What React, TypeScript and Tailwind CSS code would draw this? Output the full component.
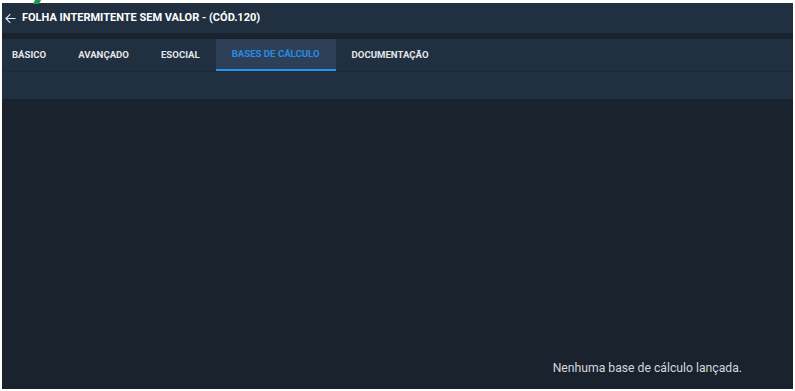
import React from "react";

const tabs = ["BÁSICO", "AVANÇADO", "ESOCIAL", "BASES DE CÁLCULO", "DOCUMENTAÇÃO"];

const App = () => {
  const active = 3;

  return (
    <div
      className="w-[795px] h-[391px] bg-white pt-[3px] pl-[2px] pr-[2px] pb-[2px] overflow-hidden relative"
      style={{ fontFamily: "Roboto, 'Liberation Sans', sans-serif" }}
    >
      {/* pedaço do logo que aparece em cima */}
      <div className="absolute left-[34px] top-0 w-[6px] h-[4px] bg-[#1f9a4a] -skew-x-[30deg]" />
      <div className="flex flex-col h-full bg-[#1a222d]">
        <div className="h-[30px] bg-[#213040] flex items-center pl-[3px] gap-[6px] text-white">
          <svg width="11" height="11" viewBox="0 0 12 12" fill="none" stroke="#e6e9ee" strokeWidth="1.2">
            <path d="M11.5 6H1M5.8 1.2L1 6L5.8 10.8" />
          </svg>
          <span className="text-[11px] font-bold">FOLHA INTERMITENTE SEM VALOR - (CÓD.120)</span>
        </div>
        <div className="h-[6px]" />
        <div className="flex flex-col bg-[#213040]">
          <div className="h-[33px] flex border-b border-[#1d2a38]">
            {tabs.map((t, i) => (
              <div
                key={t}
                className={
                  i === active
                    ? "h-full flex items-center px-[16px] bg-[#2d4057] text-[#2a8be6] border-b-2 border-[#2196f3] text-[9.6px] font-bold"
                    : "h-full flex items-center px-[16px] first:pl-[10px] text-[#e3e6ea] text-[9.6px] font-bold"
                }
              >
                {t}
              </div>
            ))}
          </div>
          <div className="h-[27px]" />
        </div>
        <div className="flex-1 flex items-end justify-end pr-[51px] pb-[12px]">
          <span className="text-[12.2px] text-[#d3d6da]">Nenhuma base de cálculo lançada.</span>
        </div>
      </div>
    </div>
  );
};

export default App;
